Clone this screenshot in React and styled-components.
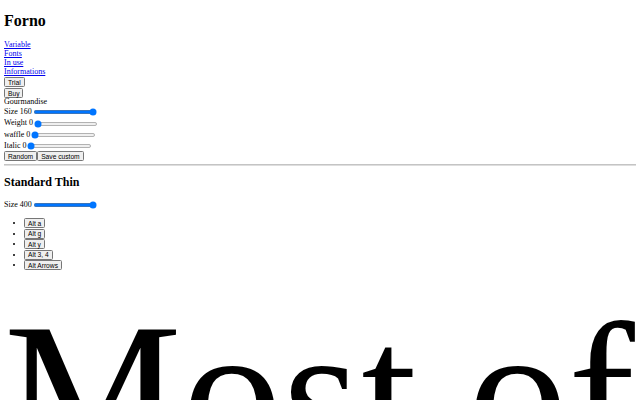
import React, { useState } from 'react';
import styled, { createGlobalStyle } from 'styled-components';

const GlobalStyle = createGlobalStyle`
  html {
    zoom: 0.5;
  }
  body {
    margin: 8px;
    font-family: "Liberation Serif", "Times New Roman", serif;
    font-size: 16px;
    color: #000;
    background: #fff;
  }
`;

const Title = styled.h1`
  font-size: 32px;
  font-weight: bold;
  margin: 15px 0 21px;
`;

const SubTitle = styled.h2`
  font-size: 24px;
  font-weight: bold;
  margin: 18px 0 18px;
`;

const Nav = styled.nav`
  display: flex;
  flex-direction: column;
  align-items: flex-start;
`;

const NavLink = styled.a`
  color: #0000ee;
  text-decoration: underline;
`;

const Line = styled.div`
  line-height: ${p => p.$height}px;
`;

const Button = styled.button`
  font-family: "Liberation Sans", Arial, sans-serif;
  font-size: 13.33px;
  line-height: normal;
  vertical-align: middle;
`;

const Slider = styled.input.attrs({ type: 'range' })`
  vertical-align: middle;
`;

const Rule = styled.hr`
  height: 0;
  margin: 6px 0 8px;
  border: none;
  border-top: 1px solid #c4c4c4;
  border-bottom: 1px solid #dedede;
`;

const AltList = styled.ul`
  margin: 16px 0 14px;
  padding-left: 40px;

  li {
    line-height: 21px;
  }
`;

const Specimen = styled.div`
  font-size: ${p => p.size}px;
  font-weight: normal;
  letter-spacing: 1px;
`;

const Axis = ({ name, value, min, max, onChange }) => (
  <Line $height={22}>
    <label>
      {name} {value}
      <Slider min={min} max={max} value={value} onChange={e => onChange(Number(e.target.value))} />
    </label>
  </Line>
);

const links = ['Variable', 'Fonts', 'In use', 'Informations'];
const alts = ['Alt a', 'Alt g', 'Alt y', 'Alt 3, 4', 'Alt Arrows'];

const App = () => {
  const [size, setSize] = useState(160);
  const [weight, setWeight] = useState(0);
  const [waffle, setWaffle] = useState(0);
  const [italic, setItalic] = useState(0);
  const [standardSize, setStandardSize] = useState(400);

  return (
    <>
      <GlobalStyle />
      <header>
        <Title>Forno</Title>
        <Nav>
          {links.map(link => (
            <NavLink key={link} href="#">
              {link}
            </NavLink>
          ))}
        </Nav>
        <Line $height={22}>
          <Button>Trial</Button>
        </Line>
        <Line $height={22}>
          <Button>Buy</Button>
        </Line>
        <Line $height={16}>Gourmandise</Line>
        <Axis name="Size" value={size} min={10} max={160} onChange={setSize} />
        <Axis name="Weight" value={weight} min={0} max={100} onChange={setWeight} />
        <Axis name="waffle" value={waffle} min={0} max={100} onChange={setWaffle} />
        <Axis name="Italic" value={italic} min={0} max={100} onChange={setItalic} />
        <Line $height={20}>
          <Button>Random</Button>
          <Button>Save custom</Button>
        </Line>
      </header>
      <Rule />
      <section>
        <SubTitle>Standard Thin</SubTitle>
        <Axis name="Size" value={standardSize} min={10} max={400} onChange={setStandardSize} />
        <AltList>
          {alts.map(alt => (
            <li key={alt}>
              <Button>{alt}</Button>
            </li>
          ))}
        </AltList>
        <Specimen size={standardSize}>Most of the time the oven is warm</Specimen>
      </section>
    </>
  );
};

export default App;
